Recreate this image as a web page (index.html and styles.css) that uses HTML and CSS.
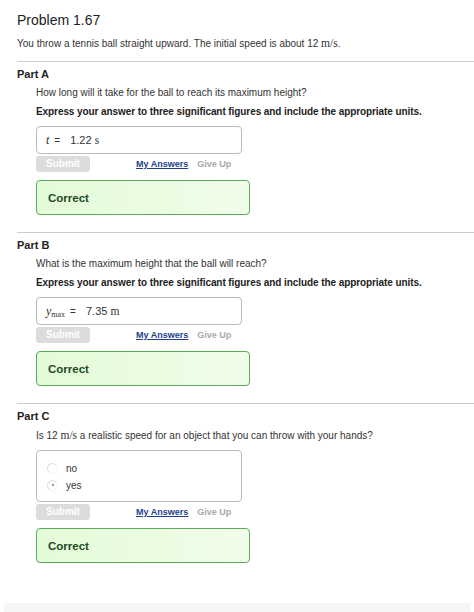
FILE: index.html
```html
<!DOCTYPE html>
<html>
<head>
<meta charset="utf-8">
<link rel="stylesheet" href="styles.css">
</head>
<body>
<div class="page">
  <h1 class="title">Problem 1.67</h1>
  <p class="intro">You throw a tennis ball straight upward. The initial speed is about 12 <span class="math">m/s</span>.</p>

  <section class="part">
    <h2 class="part-title">Part A</h2>
    <div class="part-body">
      <p class="question">How long will it take for the ball to reach its maximum height?</p>
      <p class="instr">Express your answer to three significant figures and include the appropriate units.</p>
      <div class="answer-box">
        <span class="var"><i>t</i></span><span class="eq">=</span><span class="val">1.22 <span class="math">s</span></span>
      </div>
      <div class="actions">
        <span class="submit">Submit</span>
        <a class="my-answers">My Answers</a>
        <span class="give-up">Give Up</span>
      </div>
      <div class="correct">Correct</div>
    </div>
  </section>

  <section class="part">
    <h2 class="part-title">Part B</h2>
    <div class="part-body">
      <p class="question">What is the maximum height that the ball will reach?</p>
      <p class="instr">Express your answer to three significant figures and include the appropriate units.</p>
      <div class="answer-box">
        <span class="var"><i>y</i><sub>max</sub></span><span class="eq">=</span><span class="val">7.35 <span class="math">m</span></span>
      </div>
      <div class="actions">
        <span class="submit">Submit</span>
        <a class="my-answers">My Answers</a>
        <span class="give-up">Give Up</span>
      </div>
      <div class="correct">Correct</div>
    </div>
  </section>

  <section class="part last">
    <h2 class="part-title">Part C</h2>
    <div class="part-body">
      <p class="question">Is 12 <span class="math">m/s</span> a realistic speed for an object that you can throw with your hands?</p>
      <div class="choice-box">
        <label class="choice"><span class="radio"></span>no</label>
        <label class="choice"><span class="radio checked"></span>yes</label>
      </div>
      <div class="actions">
        <span class="submit">Submit</span>
        <a class="my-answers">My Answers</a>
        <span class="give-up">Give Up</span>
      </div>
      <div class="correct">Correct</div>
    </div>
  </section>
  <div class="footer-band"></div>
</div>
</body>
</html>
```

FILE: styles.css
```css
html, body {
  margin: 0;
  padding: 0;
  background: #fff;
}
body {
  font-family: "Liberation Sans", Arial, sans-serif;
  color: #333;
}
.page {
  padding-top: 10px;
}
.title {
  margin: 0 0 0 17px;
  font-size: 14px;
  line-height: 20px;
  font-weight: normal;
  color: #222;
}
.intro {
  margin: 6px 0 0 17px;
  font-size: 10px;
  line-height: 14px;
  color: #333;
}
.math {
  font-family: "Liberation Serif", "Times New Roman", serif;
  font-size: 11.5px;
}
.part {
  margin-left: 17px;
  border-top: 1px solid #ccc;
  padding-bottom: 17px;
}
.intro + .part {
  margin-top: 10px;
}
.part.last {
  padding-bottom: 0;
}
.part-title {
  margin: 5px 0 0 0;
  font-size: 11px;
  line-height: 14px;
  font-weight: bold;
  color: #222;
}
.part-body {
  padding-left: 19px;
}
.question {
  margin: 5px 0 0 0;
  font-size: 10px;
  line-height: 14px;
  color: #333;
}
.instr {
  margin: 5px 0 0 0;
  font-size: 10px;
  line-height: 14px;
  font-weight: bold;
  letter-spacing: -0.08px;
  color: #222;
}
.answer-box {
  margin-top: 7px;
  width: 195px;
  height: 26px;
  border: 1px solid #bbb;
  border-radius: 4px;
  display: flex;
  align-items: center;
  padding-left: 9px;
  box-sizing: content-box;
  font-size: 10px;
  color: #333;
}
.var {
  font-family: "Liberation Serif", "Times New Roman", serif;
  font-size: 12px;
}
.var sub {
  font-size: 8px;
  vertical-align: -2px;
}
.eq {
  margin: 0 10px 0 5px;
  font-size: 10px;
}
.val {
  font-size: 11px;
}
.actions {
  margin-top: 2px;
  display: flex;
  align-items: center;
  height: 16px;
}
.submit {
  width: 54px;
  height: 16px;
  background: #dcdcdc;
  border-radius: 3px;
  color: #fff;
  font-weight: bold;
  font-size: 10px;
  line-height: 16px;
  text-align: center;
}
.my-answers {
  margin-left: 46px;
  font-size: 9px;
  font-weight: bold;
  color: #1d3f8c;
  text-decoration: underline;
}
.give-up {
  margin-left: 9px;
  font-size: 9px;
  font-weight: bold;
  color: #a8a8a8;
}
.correct {
  margin-top: 8px;
  width: 201px;
  height: 33px;
  border: 1px solid #5aab5a;
  border-radius: 4px;
  background: linear-gradient(to right, #e4fbd9, #f1fdea);
  display: flex;
  align-items: center;
  padding-left: 11px;
  box-sizing: content-box;
  font-size: 11.5px;
  font-weight: bold;
  color: #1f4a1f;
}
.choice-box {
  margin-top: 7px;
  width: 195px;
  border: 1px solid #bbb;
  border-radius: 4px;
  padding: 10px 0 9px 9px;
  box-sizing: content-box;
  display: flex;
  flex-direction: column;
  gap: 3px;
}
.choice {
  display: flex;
  align-items: center;
  height: 14px;
  font-size: 10px;
  color: #333;
}
.radio {
  width: 9px;
  height: 9px;
  border-radius: 50%;
  border: 1px solid #ddd;
  border-right-color: #f3f3f3;
  border-bottom-color: #f3f3f3;
  margin-right: 8px;
  margin-left: 1px;
  display: flex;
  align-items: center;
  justify-content: center;
}
.radio.checked::after {
  content: "";
  width: 2px;
  height: 2px;
  border-radius: 50%;
  background: #777;
}
.footer-band {
  margin: 40px 4px 0 4px;
  height: 10px;
  background: #f6f6f6;
}
```
